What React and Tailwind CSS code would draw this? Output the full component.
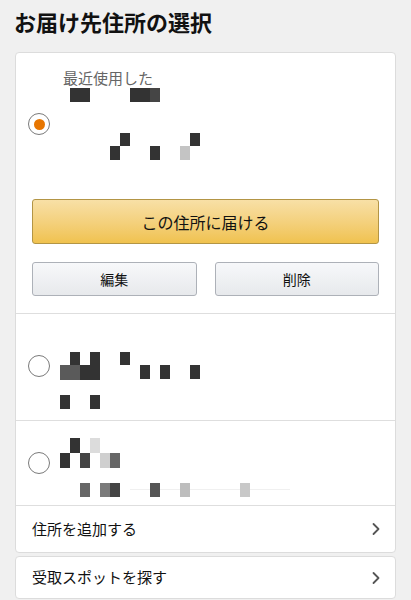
import React from 'react';

const font = { fontFamily: '"Noto Sans CJK JP", "Noto Sans", sans-serif' };

const Radio = ({ checked, className = '' }) => (
    <div
        className={`w-[22px] h-[22px] shrink-0 rounded-full border border-[#7a7a7a] bg-white flex items-center justify-center ${className}`}
    >
        {checked && <div className="w-[11px] h-[11px] rounded-full bg-[#e77600]" />}
    </div>
);

// pixelated (censored) address blocks
const Mosaic = ({ width, height, cells }) => (
    <svg width={width} height={height} viewBox={`0 0 ${width} ${height}`} className="block">
        {cells.map(([x, y, w, h, c], i) => (
            <rect key={i} x={x} y={y} width={w} height={h} fill={c} />
        ))}
    </svg>
);

const Chevron = () => (
    <svg width="10" height="14" viewBox="0 0 10 14" className="shrink-0">
        <path d="M2.5 2l5 5-5 5" fill="none" stroke="#555" strokeWidth="1.8" strokeLinecap="round" strokeLinejoin="round" />
    </svg>
);

const App = () => {
    return (
        <div className="min-h-screen w-[411px] bg-[#f0f0f0] px-[15px]" style={font}>
            {/* Header */}
            <div className="h-[52px] pt-[5px]">
                <h1 className="text-[22px] leading-[32px] font-bold text-[#111] -ml-[1px]">お届け先住所の選択</h1>
            </div>

            {/* Address list card */}
            <div className="bg-white border border-[#dcdcdc] rounded-[4px]">
                {/* Selected address */}
                <div className="border-b border-[#dedede]">
                    <div className="flex items-center pt-[15px] pl-[12px]">
                        <Radio checked />
                        <div className="ml-[10px]">
                            <p className="text-[15px] leading-[20px] text-[#666] pl-[3px]">最近使用した</p>
                            <Mosaic
                                width={200}
                                height={92}
                                cells={[
                                    [10, 0, 20, 14, '#333'],
                                    [70, 0, 20, 14, '#333'],
                                    [90, 0, 10, 14, '#454545'],
                                    [60, 45, 10, 13, '#333'],
                                    [130, 45, 10, 13, '#333'],
                                    [50, 58, 10, 14, '#333'],
                                    [90, 58, 10, 14, '#333'],
                                    [120, 58, 10, 14, '#c4c4c4'],
                                ]}
                            />
                        </div>
                    </div>
                    <div className="px-[16px] pt-[19px] pb-[17px]">
                        <button className="w-full h-[45px] rounded-[3px] border border-[#b39545] bg-gradient-to-b from-[#f8e0a6] to-[#f0c24e] text-[16px] text-[#111]">
                            この住所に届ける
                        </button>
                        <div className="grid grid-cols-2 gap-[18px] mt-[18px]">
                            <button className="h-[34px] rounded-[3px] border border-[#adb1b8] bg-gradient-to-b from-[#f7f8fa] to-[#e7e9ec] text-[14px] text-[#111]">
                                編集
                            </button>
                            <button className="h-[34px] rounded-[3px] border border-[#adb1b8] bg-gradient-to-b from-[#f7f8fa] to-[#e7e9ec] text-[14px] text-[#111]">
                                削除
                            </button>
                        </div>
                    </div>
                </div>

                {/* Address 2 */}
                <div className="flex items-start pl-[12px] pt-[38px] pb-[11px] border-b border-[#dedede]">
                    <Radio className="mt-[3px]" />
                    <div className="ml-[10px]">
                        <Mosaic
                            width={150}
                            height={57}
                            cells={[
                                [10, 0, 10, 13, '#333'],
                                [30, 0, 10, 13, '#333'],
                                [60, 0, 10, 13, '#333'],
                                [0, 13, 20, 15, '#5a5a5a'],
                                [20, 13, 20, 15, '#333'],
                                [80, 13, 10, 14, '#333'],
                                [100, 13, 10, 14, '#333'],
                                [130, 13, 10, 14, '#333'],
                                [0, 43, 10, 14, '#333'],
                                [30, 43, 10, 14, '#333'],
                            ]}
                        />
                    </div>
                </div>

                {/* Address 3 */}
                <div className="flex items-start pl-[12px] pt-[17px] pb-[8px] border-b border-[#dedede]">
                    <Radio className="mt-[14px]" />
                    <div className="ml-[10px]">
                        <Mosaic
                            width={230}
                            height={59}
                            cells={[
                                [10, 0, 10, 15, '#333'],
                                [30, 0, 10, 15, '#dcdcdc'],
                                [0, 15, 10, 15, '#333'],
                                [20, 15, 10, 15, '#444'],
                                [40, 15, 10, 15, '#cfcfcf'],
                                [50, 15, 10, 15, '#666'],
                                [70, 51, 160, 1, '#f0f0f0'],
                                [20, 45, 10, 14, '#666'],
                                [40, 45, 10, 14, '#7a7a7a'],
                                [50, 45, 10, 14, '#444'],
                                [90, 45, 10, 14, '#555'],
                                [120, 45, 10, 14, '#bdbdbd'],
                                [180, 45, 10, 14, '#c8c8c8'],
                            ]}
                        />
                    </div>
                </div>

                {/* Add address */}
                <div className="h-[46px] flex items-center justify-between pl-[16px] pr-[14px]">
                    <span className="text-[15px] text-[#111]">住所を追加する</span>
                    <Chevron />
                </div>
            </div>

            {/* Pickup spots */}
            <div className="mt-[3px] bg-white border border-[#dcdcdc] rounded-[4px] h-[43px] flex items-center justify-between pl-[16px] pr-[14px]">
                <span className="text-[15px] text-[#111]">受取スポットを探す</span>
                <Chevron />
            </div>
        </div>
    );
};

export default App;
